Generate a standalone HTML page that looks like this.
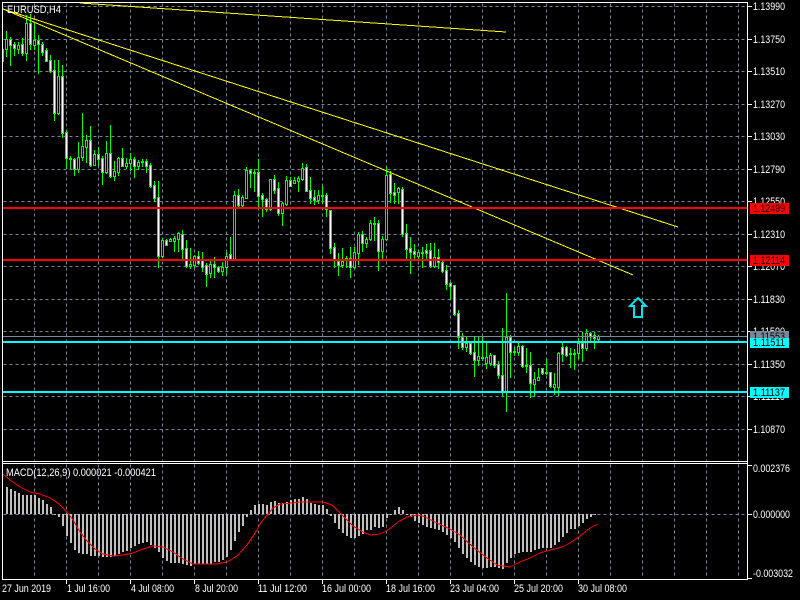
<!DOCTYPE html>
<html>
<head>
<meta charset="utf-8">
<title>EURUSD,H4</title>
<style>
html,body{margin:0;padding:0;background:#000;width:800px;height:600px;overflow:hidden}
svg{display:block;position:absolute;left:0;top:0}
text{font-family:"Liberation Sans",sans-serif;font-size:11px;fill:#fff}
.k{fill:#000}
</style>
</head>
<body>
<svg id="s" width="800" height="600" viewBox="0 0 800 600" xmlns="http://www.w3.org/2000/svg">
<g id="grid" shape-rendering="crispEdges"></g>
<g id="hist" shape-rendering="crispEdges"></g>
<polyline fill="none" stroke="#ff0000" stroke-width="1" shape-rendering="crispEdges" points="3,474 10,480 20,487 30,492 40,494 50,498 58,503 67,512 73,520 80,532 87,541 95,549 103,554 113,556 123,555 133,553 143,549 153,546 163,547 173,552 183,559 193,564 207,564 217,564 227,562 237,556 247,545 257,530 260,524 267,515 273,508 280,504 293,503 300,502 323,502 332,505 340,513 353,526 363,532 370,535 380,534 388,530 398,522 407,517 417,515 423,516 437,523 450,529 460,535 473,547 487,558 497,565 510,567 520,562 530,558 540,553 550,550 562,547 570,543 580,536 590,528 598,524"/>
<g id="cand" shape-rendering="crispEdges"></g>
<g shape-rendering="crispEdges" stroke="#ffff00" stroke-width="1" fill="none">
<line x1="80" y1="3" x2="506" y2="32"/>
<line x1="3" y1="9" x2="678" y2="227"/>
<line x1="3" y1="9" x2="633" y2="275"/>
</g>
<path d="M638 298 L646 306 H642 V317 H634 V306 H630 Z" fill="none" stroke="#00e5ee" stroke-width="2"/>
<g shape-rendering="crispEdges">
<rect x="3" y="207" width="744" height="2" fill="#ff0000"/>
<rect x="3" y="259" width="744" height="2" fill="#ff0000"/>
<rect x="3" y="336" width="744" height="1" fill="#778899"/>
<rect x="3" y="341" width="744" height="2" fill="#00ffff"/>
<rect x="3" y="391" width="744" height="2" fill="#00ffff"/>
<rect x="2" y="2" width="746" height="1" fill="#fff"/>
<rect x="2" y="2" width="1" height="578" fill="#fff"/>
<rect x="747" y="2" width="1" height="578" fill="#fff"/>
<rect x="2" y="461" width="746" height="1" fill="#fff"/>
<rect x="2" y="463" width="746" height="1" fill="#fff"/>
<rect x="2" y="579" width="746" height="1" fill="#fff"/>
</g>
<g id="ticks" shape-rendering="crispEdges" fill="#fff"></g>
<text x="753" y="10" textLength="32" lengthAdjust="spacingAndGlyphs">1.13990</text>
<text x="753" y="43" textLength="32" lengthAdjust="spacingAndGlyphs">1.13750</text>
<text x="753" y="75" textLength="32" lengthAdjust="spacingAndGlyphs">1.13510</text>
<text x="753" y="108" textLength="32" lengthAdjust="spacingAndGlyphs">1.13270</text>
<text x="753" y="140" textLength="32" lengthAdjust="spacingAndGlyphs">1.13030</text>
<text x="753" y="173" textLength="32" lengthAdjust="spacingAndGlyphs">1.12790</text>
<text x="753" y="205" textLength="32" lengthAdjust="spacingAndGlyphs">1.12550</text>
<text x="753" y="238" textLength="32" lengthAdjust="spacingAndGlyphs">1.12310</text>
<text x="753" y="270" textLength="32" lengthAdjust="spacingAndGlyphs">1.12070</text>
<text x="753" y="303" textLength="32" lengthAdjust="spacingAndGlyphs">1.11830</text>
<text x="753" y="335" textLength="32" lengthAdjust="spacingAndGlyphs">1.11590</text>
<text x="753" y="368" textLength="32" lengthAdjust="spacingAndGlyphs">1.11350</text>
<text x="753" y="400" textLength="32" lengthAdjust="spacingAndGlyphs">1.11110</text>
<text x="753" y="433" textLength="32" lengthAdjust="spacingAndGlyphs">1.10870</text>
<g shape-rendering="crispEdges">
<rect x="750" y="203" width="39" height="11" fill="#ff0000"/>
<rect x="750" y="255" width="39" height="11" fill="#ff0000"/>
<rect x="750" y="331" width="39" height="11" fill="#778899"/>
</g>
<text class="k" x="753" y="340" textLength="32" lengthAdjust="spacingAndGlyphs">1.11553</text>
<g shape-rendering="crispEdges">
<rect x="750" y="338" width="39" height="10" fill="#00ffff"/>
<rect x="750" y="387" width="39" height="11" fill="#00ffff"/>
</g>
<text class="k" x="753" y="212" textLength="32" lengthAdjust="spacingAndGlyphs">1.12499</text>
<text class="k" x="753" y="264" textLength="32" lengthAdjust="spacingAndGlyphs">1.12114</text>
<text class="k" x="753" y="346" textLength="32" lengthAdjust="spacingAndGlyphs">1.11511</text>
<text class="k" x="753" y="396" textLength="32" lengthAdjust="spacingAndGlyphs">1.11137</text>
<text x="753" y="472" textLength="37" lengthAdjust="spacingAndGlyphs">0.002376</text>
<text x="753" y="518" textLength="37" lengthAdjust="spacingAndGlyphs">0.000000</text>
<text x="753" y="577" textLength="40" lengthAdjust="spacingAndGlyphs">-0.003032</text>
<text x="7" y="13" textLength="54" lengthAdjust="spacingAndGlyphs">EURUSD,H4</text>
<text x="6" y="476" textLength="150" lengthAdjust="spacingAndGlyphs">MACD(12,26,9) 0.000021 -0.000421</text>
<text x="2" y="592" textLength="49" lengthAdjust="spacingAndGlyphs">27 Jun 2019</text>
<text x="67" y="592" textLength="43" lengthAdjust="spacingAndGlyphs">1 Jul 16:00</text>
<text x="131" y="592" textLength="43" lengthAdjust="spacingAndGlyphs">4 Jul 08:00</text>
<text x="195" y="592" textLength="43" lengthAdjust="spacingAndGlyphs">8 Jul 20:00</text>
<text x="258" y="592" textLength="49" lengthAdjust="spacingAndGlyphs">11 Jul 12:00</text>
<text x="322" y="592" textLength="49" lengthAdjust="spacingAndGlyphs">16 Jul 00:00</text>
<text x="386" y="592" textLength="49" lengthAdjust="spacingAndGlyphs">18 Jul 16:00</text>
<text x="450" y="592" textLength="49" lengthAdjust="spacingAndGlyphs">23 Jul 04:00</text>
<text x="514" y="592" textLength="49" lengthAdjust="spacingAndGlyphs">25 Jul 20:00</text>
<text x="578" y="592" textLength="49" lengthAdjust="spacingAndGlyphs">30 Jul 08:00</text>
</svg>
<script>
var NS="http://www.w3.org/2000/svg";
function R(p,x,y,w,h,f){var r=document.createElementNS(NS,"rect");r.setAttribute("x",x);r.setAttribute("y",y);r.setAttribute("width",w);r.setAttribute("height",h);r.setAttribute("fill",f);p.appendChild(r);}
function L(p,a,b,c,d){var l=document.createElementNS(NS,"line");l.setAttribute("x1",a+.5);l.setAttribute("y1",b+.5);l.setAttribute("x2",c+.5);l.setAttribute("y2",d+.5);l.setAttribute("stroke","#778899");l.setAttribute("stroke-dasharray","3 3");p.appendChild(l);}
var g=document.getElementById("grid");
var ys=[6,39,71,104,136,169,201,234,266,299,331,364,396,429,514];
ys.forEach(function(y){L(g,3,y,746,y);});
for(var x=34;x<747;x+=32){L(g,x,3,x,460);L(g,x,464,x,578);}
var t=document.getElementById("ticks");
ys.concat([465,578]).forEach(function(y){R(t,748,y,4,1,"#fff");});
for(var x=66;x<600;x+=64){R(t,x,580,1,4,"#fff");}
/* histogram */
var H=[514,487,489,491,493,495,495,495,495,498,500,504,507,515,517,526,536,543,550,553,554,554,556,556,556,557,557,557,556,554,552,551,548,546,544,543,542,545,548,552,558,561,563,563,563,564,565,566,564,564,564,564,564,562,562,560,557,550,541,532,526,517,510,505,504,504,505,502,501,503,503,502,500,499,499,497,499,503,504,505,505,509,516,523,529,533,536,538,538,536,534,530,530,527,528,527,518,515,510,507,510,515,517,521,523,525,527,528,529,530,532,535,538,542,548,554,558,562,565,567,568,568,567,567,568,569,563,558,554,553,552,552,552,550,549,548,548,548,545,542,537,533,529,529,526,523,519,517,515,514];
var h=document.getElementById("hist");
H.forEach(function(y,k){var x=2+4*k;if(x<3)return;var a=Math.min(y,514),b=Math.max(y,514);if(b-a<1)return;R(h,x,a,2,b-a,"#c0c0c0");});
/* candles: [bodyTop,bodyBottom,wickTop,wickBottom,type] type 1=white(down),0=black(up) */
var C=[[49,50,49,62,0],[39,49,31,56,0],[39,45,37,65,1],[44,48,42,55,1],[45,49,42,53,0],[44,53,38,55,1],[23,53,15,60,0],[23,44,14,49,1],[40,45,23,49,0],[40,44,35,73,1],[44,52,42,55,1],[50,61,48,61,1],[60,71,55,72,1],[70,113,60,120,1],[76,113,60,114,0],[76,133,65,137,1],[132,158,130,168,1],[158,159,156,168,0],[159,169,158,175,1],[157,169,142,172,0],[146,157,113,160,0],[140,147,135,162,0],[140,165,126,166,1],[154,165,150,165,0],[154,159,147,165,1],[158,172,156,184,1],[153,172,141,173,0],[153,176,125,177,1],[171,176,161,180,0],[158,172,157,175,0],[158,166,148,166,1],[163,166,158,168,0],[159,163,153,170,0],[159,166,157,177,1],[162,166,160,169,0],[161,162,159,166,0],[161,166,159,172,1],[165,186,163,187,1],[185,198,181,200,1],[197,256,181,267,1],[240,256,238,257,0],[240,245,239,245,1],[239,241,238,241,0],[238,241,236,251,0],[233,239,232,251,0],[234,249,230,260,1],[248,266,240,267,1],[264,266,248,268,0],[256,265,255,267,0],[256,263,251,264,1],[260,267,252,271,1],[265,274,263,286,1],[264,273,261,277,0],[264,267,257,277,1],[267,271,266,272,1],[267,271,262,275,0],[256,267,252,274,0],[254,259,237,259,1],[195,259,191,259,0],[195,205,189,207,1],[197,205,195,207,0],[170,198,167,198,0],[170,173,169,187,1],[172,173,169,191,0],[172,196,159,207,1],[195,199,193,216,1],[199,209,198,211,1],[179,209,179,210,0],[179,190,175,193,1],[188,213,182,215,1],[203,213,202,225,0],[180,204,176,205,0],[180,186,177,186,1],[180,183,177,183,0],[178,181,176,191,0],[168,179,163,180,0],[167,191,164,191,1],[190,198,177,203,1],[197,200,190,204,1],[195,200,190,203,0],[195,196,186,203,0],[195,209,193,216,1],[210,248,210,253,1],[247,260,243,267,1],[261,265,253,275,1],[261,265,248,267,0],[258,259,256,267,0],[258,267,247,277,1],[252,267,247,268,0],[234,253,232,264,0],[234,243,231,251,1],[239,243,237,247,0],[223,239,220,240,0],[223,224,217,240,0],[223,251,220,270,1],[239,251,236,260,0],[175,239,167,240,0],[174,193,171,202,1],[192,195,183,203,1],[188,192,187,203,0],[189,234,187,236,1],[233,249,224,258,1],[248,252,237,273,1],[251,254,244,258,1],[252,256,250,260,0],[252,253,247,267,0],[250,253,244,258,1],[250,266,243,267,1],[257,266,243,267,0],[257,262,249,268,1],[262,271,260,272,1],[270,284,265,289,1],[283,286,282,299,1],[285,314,285,315,1],[313,337,310,348,1],[337,347,333,349,1],[343,347,337,351,0],[343,353,343,354,1],[352,360,336,376,1],[356,360,337,365,0],[357,358,336,360,0],[357,363,343,368,0],[355,363,353,365,0],[355,365,355,367,1],[364,375,361,378,1],[375,392,328,395,1],[337,392,293,411,0],[337,352,335,377,1],[351,352,347,355,0],[346,352,343,355,0],[346,366,345,367,1],[365,366,348,372,0],[365,383,352,397,1],[379,384,372,396,0],[377,380,368,380,0],[368,373,368,374,1],[372,373,359,374,1],[372,386,372,387,1],[384,387,373,394,0],[353,387,352,395,0],[347,354,343,361,1],[347,355,346,356,1],[353,354,348,367,0],[353,354,349,369,0],[343,353,338,358,0],[343,348,332,361,1],[333,348,329,350,0],[333,336,332,340,1],[335,338,332,348,1],[336,339,335,340,0]];
var c=document.getElementById("cand");
C.forEach(function(d,k){var x=2+4*k,bt=d[0],bb=d[1],wt=d[2],wb=d[3],w=d[4];
 if(k==0){R(c,3,wt,1,wb-wt,"#00ff00");return;}
 R(c,x,wt,1,wb-wt+1,"#00ff00");
 R(c,x-1,bt,3,bb-bt+1,"#00ff00");
 if(bb-bt>=2){R(c,x,bt+1,1,bb-bt-1,w?"#ffffff":"#000000");}
});
</script>
</body>
</html>
